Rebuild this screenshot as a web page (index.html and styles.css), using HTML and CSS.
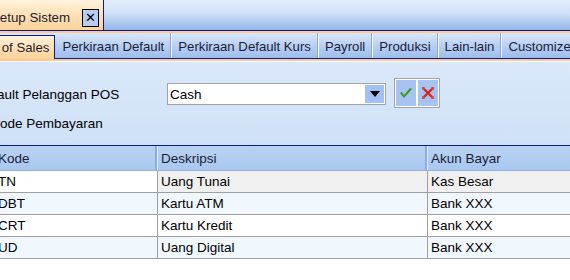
FILE: index.html
```html
<!DOCTYPE html>
<html lang="id">
<head>
    <meta charset="UTF-8">
    <title>Setup Sistem</title>
    <link rel="stylesheet" href="styles.css">
</head>
<body>
    <div class="window">
        <div class="doc-bar">
            <div class="doc-tab">
                <span>Setup Sistem</span>
                <span class="close-btn">&#x2715;</span>
            </div>
        </div>
        <div class="tab-strip">
            <div class="tab active">Point of Sales</div>
            <div class="tab">Perkiraan Default</div>
            <div class="tab">Perkiraan Default Kurs</div>
            <div class="tab">Payroll</div>
            <div class="tab">Produksi</div>
            <div class="tab">Lain-lain</div>
            <div class="tab">Customize</div>
        </div>

        <div class="panel">
            <div class="form-row">
                <label class="label">Default Pelanggan POS</label>
                <div class="combo">
                    <span class="combo-text">Cash</span>
                    <span class="combo-btn">
                        <svg width="10" height="6" viewBox="0 0 10 6"><path d="M0 0h10L5 6z" fill="#000"/></svg>
                    </span>
                </div>
                <div class="action-box">
                    <span class="action-btn">
                        <svg width="12" height="10" viewBox="0 0 12 10"><path d="M0 5l2-1 2 3 6-7 2 1-8 9z" fill="#3f9c14"/></svg>
                    </span>
                    <span class="action-btn">
                        <svg width="14" height="14" viewBox="0 0 14 14"><path d="M3 3l8 8M11 3l-8 8" stroke="#d8241c" stroke-width="2.4"/><path d="M1 2h3M10 2h3M1 12h3M10 12h3M2 1v3M12 1v3M2 10v3M12 10v3" stroke="#d8241c" stroke-width="1"/></svg>
                    </span>
                </div>
            </div>
            <div class="form-row sub">
                <label class="label">Kode Pembayaran</label>
            </div>
        </div>

        <div class="grid">
            <div class="grid-row head">
                <div class="cell c-kode">Kode</div>
                <div class="cell c-desk">Deskripsi</div>
                <div class="cell c-akun">Akun Bayar</div>
            </div>
            <div class="grid-row focused">
                <div class="cell c-kode">TN</div>
                <div class="cell c-desk">Uang Tunai</div>
                <div class="cell c-akun">Kas Besar</div>
            </div>
            <div class="grid-row alt">
                <div class="cell c-kode">DBT</div>
                <div class="cell c-desk">Kartu ATM</div>
                <div class="cell c-akun">Bank XXX</div>
            </div>
            <div class="grid-row">
                <div class="cell c-kode">CRT</div>
                <div class="cell c-desk">Kartu Kredit</div>
                <div class="cell c-akun">Bank XXX</div>
            </div>
            <div class="grid-row alt">
                <div class="cell c-kode">UD</div>
                <div class="cell c-desk">Uang Digital</div>
                <div class="cell c-akun">Bank XXX</div>
            </div>
        </div>
    </div>
</body>
</html>
```

FILE: styles.css
```css
body {
    margin: 0;
    padding: 0;
    background: #fff;
    font-family: "Liberation Sans", Arial, sans-serif;
    font-size: 13.5px;
    color: #000;
    overflow: hidden;
}
.window {
    width: 620px;
    margin-left: -40px;
}

/* document tab bar */
.doc-bar {
    height: 30px;
    display: flex;
    background: linear-gradient(#e2edfb, #cfe0f7 45%, #94b6ea);
    border-bottom: 1px solid #0b1a8e;
    box-shadow: 0 2px 0 #ffc891;
}
.doc-tab {
    display: flex;
    align-items: center;
    gap: 12px;
    padding: 5px 4px 0 31px;
    background: linear-gradient(#fff3df, #fde0b4 50%, #fcd39c);
    border-right: 1px solid #0b1a8e;
    font-size: 13.3px;
    color: #1d1d36;
}
.close-btn {
    width: 15px;
    height: 16px;
    border: 1px solid #000;
    background: #b7cdf2;
    display: flex;
    align-items: center;
    justify-content: center;
    font-size: 13px;
    line-height: 1;
    color: #000;
}

/* page tabs */
.tab-strip {
    margin-top: 2px;
    height: 25px;
    display: flex;
    background: linear-gradient(#dae7fa, #b9d0f4 50%, #9dbdee);
    border-bottom: 1px solid #0b1a8e;
    box-shadow: 0 2px 0 #ffc891;
    font-size: 13.2px;
}
.tab {
    display: flex;
    align-items: center;
    padding: 2px 6px 0 7px;
    border-right: 1px solid #8da7cf;
    box-shadow: 1px 0 0 #f4f8ff;
    color: #1d1d36;
    white-space: nowrap;
}
.tab.active {
    margin-top: 2px;
    padding: 0 5px 0 8px;
    background: linear-gradient(#fff3df, #fde0b4 50%, #fcd39c);
    border-top: 1px solid #0b1a8e;
    border-right: 1px solid #0b1a8e;
    box-shadow: none;
    margin-bottom: -1px;
}

/* form area */
.panel {
    margin-top: 3px;
    height: 84px;
    padding-top: 21px;
    background: linear-gradient(#dbe8fa, #cfe1f8);
    border-bottom: 1px solid #0b1a8e;
    box-sizing: border-box;
}
.form-row {
    display: flex;
    align-items: center;
    height: 22px;
}
.form-row.sub {
    height: 20px;
    margin-top: 8px;
}
.label {
    width: 191px;
    padding-left: 16px;
}
.sub .label {
    padding-left: 31px;
}
.combo {
    width: 217px;
    height: 20px;
    border: 1px solid #a3a3a3;
    background: #fff;
    display: flex;
    align-items: center;
    justify-content: space-between;
}
.combo-text {
    padding-left: 2px;
}
.combo-btn {
    width: 19px;
    height: 18px;
    margin-right: 1px;
    background: #a2c0f1;
    display: flex;
    align-items: center;
    justify-content: center;
}
.action-box {
    margin-left: 8px;
    margin-bottom: 2px;
    display: flex;
    gap: 2px;
    padding: 1px;
    background: #fff;
    border: 1px solid #a3a3a3;
}
.action-btn {
    width: 20px;
    height: 26px;
    background: #a6c3f2;
    display: flex;
    align-items: center;
    justify-content: center;
}

/* grid */
.grid {
    background: #fff;
    height: 140px;
}
.grid-row {
    display: flex;
    height: 21px;
    border-bottom: 1px solid #a0a0a0;
}
.grid-row.head {
    height: 24px;
    background: linear-gradient(#b9d2f2, #a9c8f0);
    border-bottom: 1px solid #8fb0e0;
}
.grid-row.alt {
    background: #f0f8fe;
}
.grid-row.focused .c-desk,
.grid-row.focused .c-akun {
    background: #f0f0f0;
}
.cell {
    display: flex;
    align-items: center;
    padding-left: 3px;
    box-sizing: border-box;
    border-right: 1px solid #a0a0a0;
    white-space: nowrap;
}
.head .cell {
    border-right: 1px solid #e6eefb;
    box-shadow: inset -2px 0 0 #8aaedc;
    color: #1d1d36;
}
.c-kode {
    width: 198px;
    padding-left: 38px;
}
.c-desk {
    width: 270px;
}
.c-akun {
    flex: 1;
}
```
